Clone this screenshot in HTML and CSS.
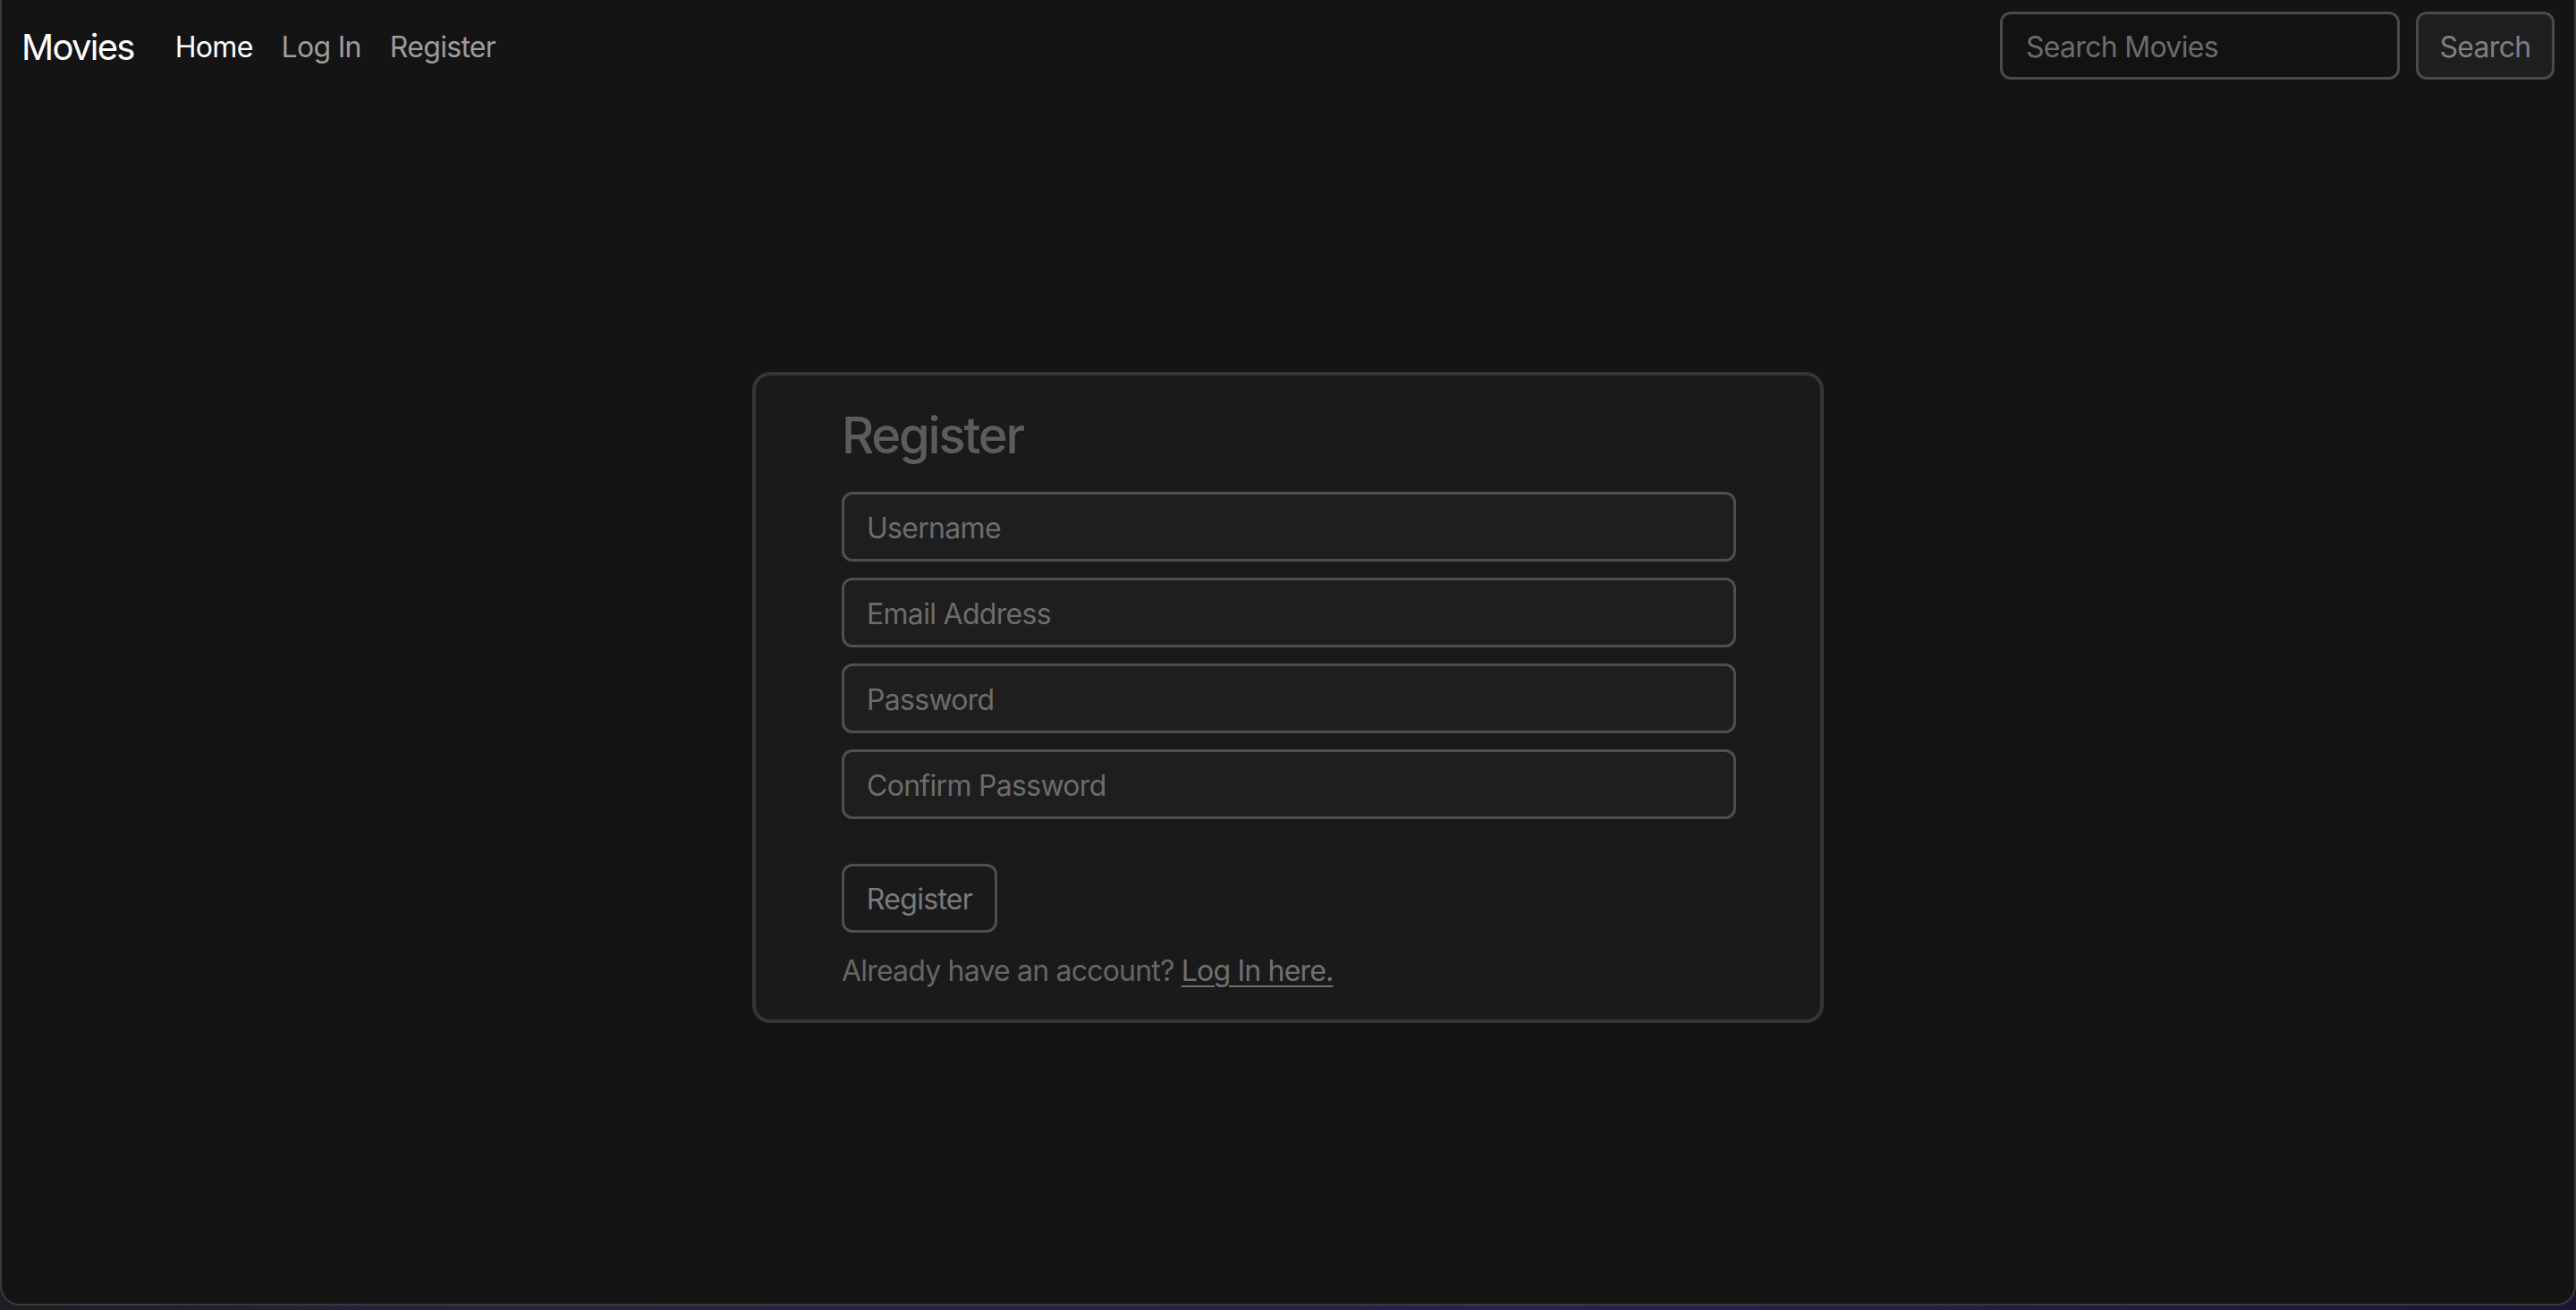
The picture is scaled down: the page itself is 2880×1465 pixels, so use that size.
FILE: index.html
```html
<!DOCTYPE html>
<html lang="en">
<head>
<meta charset="utf-8">
<title>Register - Movies</title>
<link rel="stylesheet" href="styles.css">
</head>
<body>
<div class="window">
  <nav class="navbar">
    <a class="brand" href="#">Movies</a>
    <ul class="nav-links">
      <li><a class="nav-link active" href="#">Home</a></li>
      <li><a class="nav-link" href="#">Log In</a></li>
      <li><a class="nav-link" href="#">Register</a></li>
    </ul>
    <form class="search">
      <input class="search-input" type="search" placeholder="Search Movies">
      <button class="search-btn" type="button">Search</button>
    </form>
  </nav>
  <main class="main">
    <div class="card">
      <form class="register-form">
        <h3 class="title">Register</h3>
        <div class="fields">
          <input class="field" type="text" placeholder="Username">
          <input class="field" type="email" placeholder="Email Address">
          <input class="field" type="password" placeholder="Password">
          <input class="field" type="password" placeholder="Confirm Password">
        </div>
        <button class="submit" type="button">Register</button>
        <p class="note">Already have an account? <a href="#" class="note-link">Log In here.</a></p>
      </form>
    </div>
  </main>
</div>
</body>
</html>
```
FILE: styles.css
```css
* { box-sizing: border-box; }
html, body {
  margin: 0;
  padding: 0;
  height: 1465px;
  overflow: hidden;
}
body {
  background: linear-gradient(90deg, #1e1e22 0%, #2a2040 20%, #2c1f52 60%, #1d1438 100%);
  font-family: "Inter", "Noto Sans", sans-serif;
}
.window {
  height: 1460px;
  background: #141414;
  border: 2px solid #3a3a3a;
  border-top: none;
  border-radius: 0 0 22px 22px;
  display: flex;
  flex-direction: column;
  overflow: hidden;
}
.navbar {
  height: 101px;
  flex: none;
  display: flex;
  align-items: center;
  padding: 0 22px;
}
.brand {
  font-size: 40px;
  color: #ffffff;
  text-decoration: none;
  margin-right: 30px;
  letter-spacing: -1.7px;
  padding-top: 3px;
}
.nav-links {
  list-style: none;
  margin: 0;
  padding: 3px 0 0;
  display: flex;
  flex: 1;
}
.nav-link {
  display: block;
  padding: 0 16px;
  font-size: 32px;
  color: #9d9d9d;
  text-decoration: none;
  letter-spacing: -0.7px;
}
.nav-link.active { color: #ffffff; }
.search {
  display: flex;
  gap: 18px;
  margin: 0;
}
.search-input {
  width: 447px;
  height: 76px;
  background: #121212;
  border: 3px solid #4a4a4a;
  border-radius: 12px;
  padding: 3px 26px 0;
  font-family: inherit;
  font-size: 32px;
  color: #ddd;
  outline: none;
  letter-spacing: -0.7px;
}
.search-input::placeholder { color: #6c6c6c; }
.search-btn {
  width: 155px;
  height: 76px;
  background: #1e1e1e;
  border: 3px solid #4a4a4a;
  border-radius: 12px;
  font-family: inherit;
  font-size: 32px;
  color: #808080;
  padding: 3px 0 0;
  letter-spacing: -0.7px;
}
.main {
  flex: 1;
  display: flex;
  align-items: center;
  justify-content: center;
}
.card {
  width: 1198px;
  background: #1a1a1a;
  border: 4px solid #353535;
  border-radius: 20px;
  padding: 34px 96px 30px;
}
.register-form { margin: 0; }
.title {
  margin: 0 0 29px;
  font-size: 56px;
  line-height: 67px;
  font-weight: 500;
  color: #5c5c5c;
  letter-spacing: -2.2px;
}
.fields {
  display: flex;
  flex-direction: column;
  gap: 18px;
}
.field {
  display: block;
  width: 1000px;
  height: 78px;
  background: #1e1e1e;
  border: 3px solid #4f4f4f;
  border-radius: 12px;
  padding: 3px 25px 0;
  font-family: inherit;
  font-size: 32px;
  color: #ddd;
  outline: none;
  letter-spacing: -0.7px;
}
.field::placeholder { color: #6c6c6c; }
.submit {
  display: block;
  margin-top: 50px;
  height: 77px;
  width: 174px;
  background: transparent;
  border: 3px solid #4f4f4f;
  border-radius: 12px;
  font-family: inherit;
  font-size: 32px;
  color: #7a7a7a;
  padding: 3px 0 0;
  letter-spacing: -0.7px;
}
.note {
  margin: 19px 0 0;
  font-size: 32px;
  line-height: 48px;
  color: #666666;
  letter-spacing: -0.8px;
}
.note-link {
  color: #707070;
  text-decoration: underline;
  text-underline-offset: 5px;
  text-decoration-thickness: 2px;
}
```
